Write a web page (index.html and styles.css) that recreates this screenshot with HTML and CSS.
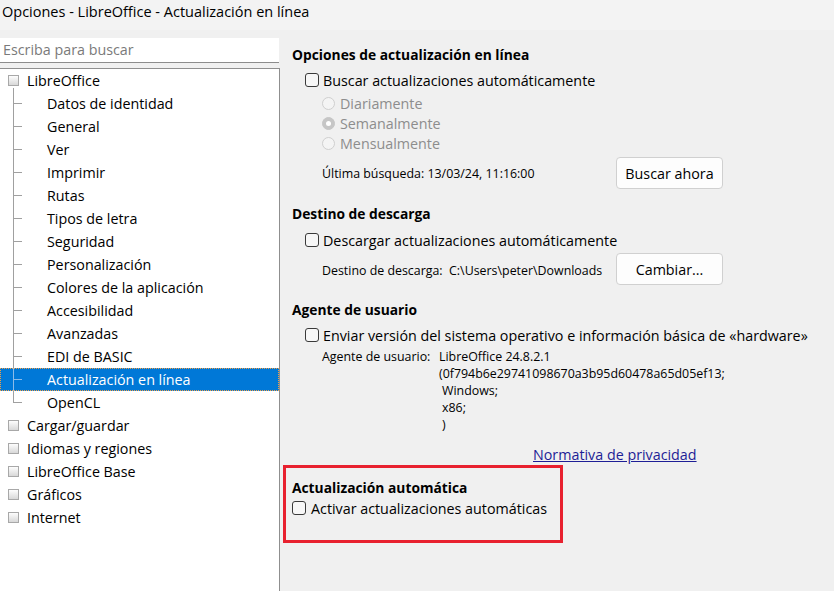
FILE: index.html
```html
<!DOCTYPE html>
<html lang="es">
<head>
<meta charset="utf-8">
<title>Opciones - LibreOffice - Actualización en línea</title>
<link rel="stylesheet" href="styles.css">
</head>
<body>
<div class="titlebar">Opciones - LibreOffice - Actualización en línea</div>
<div class="main">
  <div class="left">
    <div class="search">Escriba para buscar</div>
    <div class="tree">
      <div class="row top"><span class="exp"></span><span>LibreOffice</span></div>
      <div class="children">
        <div class="row child">Datos de identidad</div>
        <div class="row child">General</div>
        <div class="row child">Ver</div>
        <div class="row child">Imprimir</div>
        <div class="row child">Rutas</div>
        <div class="row child">Tipos de letra</div>
        <div class="row child">Seguridad</div>
        <div class="row child">Personalización</div>
        <div class="row child">Colores de la aplicación</div>
        <div class="row child">Accesibilidad</div>
        <div class="row child">Avanzadas</div>
        <div class="row child">EDI de BASIC</div>
        <div class="row child selected">Actualización en línea</div>
        <div class="row child last">OpenCL</div>
      </div>
      <div class="row top"><span class="exp"></span><span>Cargar/guardar</span></div>
      <div class="row top"><span class="exp"></span><span>Idiomas y regiones</span></div>
      <div class="row top"><span class="exp"></span><span>LibreOffice Base</span></div>
      <div class="row top"><span class="exp"></span><span>Gráficos</span></div>
      <div class="row top"><span class="exp"></span><span>Internet</span></div>
    </div>
  </div>
  <div class="right">
    <div class="section s1">
      <div class="heading">Opciones de actualización en línea</div>
      <div class="cbrow indent"><span class="cb"></span><span>Buscar actualizaciones automáticamente</span></div>
      <div class="radios">
        <div class="radiorow"><span class="radio"></span><span>Diariamente</span></div>
        <div class="radiorow"><span class="radio checked"></span><span>Semanalmente</span></div>
        <div class="radiorow"><span class="radio"></span><span>Mensualmente</span></div>
      </div>
      <div class="btnrow">
        <span class="small lastcheck">Última búsqueda: 13/03/24, 11:16:00</span>
        <span class="btn">Buscar ahora</span>
      </div>
    </div>
    <div class="section s2">
      <div class="heading">Destino de descarga</div>
      <div class="cbrow indent"><span class="cb"></span><span>Descargar actualizaciones automáticamente</span></div>
      <div class="btnrow btnrow2">
        <span class="small dest">Destino de descarga:&nbsp; C:\Users\peter\Downloads</span>
        <span class="btn">Cambiar...</span>
      </div>
    </div>
    <div class="section s3">
      <div class="heading">Agente de usuario</div>
      <div class="cbrow indent"><span class="cb"></span><span>Enviar versión del sistema operativo e información básica de «hardware»</span></div>
      <div class="agent small">
        <span class="agentlabel">Agente de usuario:</span>
        <div class="agentvalue">
          <div>LibreOffice 24.8.2.1</div>
          <div>(0f794b6e29741098670a3b95d60478a65d05ef13;</div>
          <div class="sp">Windows;</div>
          <div class="sp">x86;</div>
          <div class="sp">)</div>
        </div>
      </div>
      <div class="linkrow"><span class="link">Normativa de privacidad</span></div>
    </div>
    <div class="autobox">
      <div class="heading">Actualización automática</div>
      <div class="cbrow auto"><span class="cb"></span><span>Activar actualizaciones automáticas</span></div>
    </div>
  </div>
</div>
</body>
</html>
```
FILE: styles.css
```css
* { box-sizing: border-box; }
html, body { margin: 0; padding: 0; }
body {
  width: 834px;
  height: 591px;
  overflow: hidden;
  background: #f0f0f0;
  font-family: "Open Sans", "Liberation Sans", Arial, sans-serif;
  font-size: 14.3px;
  color: #000;
}
.titlebar {
  height: 30px;
  background: #f3f3f3;
  padding-left: 2px;
  line-height: 24px;
  font-size: 14.5px;
  white-space: nowrap;
}
.main { display: flex; height: 561px; }
.left {
  width: 280px;
  flex: none;
  display: flex;
  flex-direction: column;
  padding-top: 8px;
}
.search {
  width: 279px;
  height: 25px;
  background: #fff;
  border-bottom: 1px solid #8c8c8c;
  padding-left: 3px;
  line-height: 24px;
  color: #7a7a7a;
}
.tree {
  margin-top: 5px;
  flex: 1;
  width: 280px;
  background: #fff;
  border: 1px solid #8f8f8f;
  border-left: none;
  border-bottom: none;
}
.row {
  height: 23px;
  display: flex;
  align-items: center;
  white-space: nowrap;
  position: relative;
}
.row.top { padding-left: 8px; gap: 8px; }
.exp {
  width: 11px;
  height: 11px;
  flex: none;
  border: 1px solid #a8a8a8;
  background: linear-gradient(#fdfdfd, #d8d8d8);
}
.children { position: relative; }
.children::before {
  content: "";
  position: absolute;
  left: 13px;
  top: -4px;
  bottom: 11px;
  width: 1px;
  background: #a0a0a0;
}
.row.child { padding-left: 47px; }
.row.child::before {
  content: "";
  position: absolute;
  left: 13px;
  top: 11px;
  width: 9px;
  height: 1px;
  background: #a0a0a0;
}
.row.selected {
  background: #0078d7;
  color: #fff;
  border: 1px dotted #f0a048;
  width: 279px;
  padding-left: 46px;
}
.row.selected::before { left: 12px; top: 10px; background: #8cbbe8; }
.row.selected::after {
  content: "";
  position: absolute;
  left: 12px;
  top: -1px;
  bottom: -1px;
  width: 1px;
  background: #8cbbe8;
}

.right {
  flex: 1;
  padding: 15px 0 0 3px;
}
.section { padding-left: 9px; }
.heading {
  font-weight: bold;
  font-size: 13.8px;
  height: 20px;
  line-height: 20px;
  white-space: nowrap;
}
.cbrow {
  display: flex;
  align-items: center;
  gap: 4px;
  height: 24px;
  margin-top: 3px;
  white-space: nowrap;
}
.cbrow.indent { padding-left: 13px; }
.cb {
  width: 14px;
  height: 14px;
  flex: none;
  border: 1px solid #3a3a3a;
  border-radius: 3px;
  background: #f7f7f7;
}
.radios { margin-top: 1px; padding-left: 30px; color: #8d8d8d; }
.radiorow {
  display: flex;
  align-items: center;
  gap: 5px;
  height: 20px;
}
.radio {
  width: 13px;
  height: 13px;
  flex: none;
  border-radius: 50%;
  border: 1px solid #cfcfcf;
  background: #f4f4f4;
  position: relative;
}
.radio.checked {
  background: #c6c6c6;
  border-color: #c6c6c6;
}
.radio.checked::after {
  content: "";
  position: absolute;
  left: 3px;
  top: 3px;
  width: 5px;
  height: 5px;
  border-radius: 50%;
  background: #fff;
}
.small { font-size: 12.4px; }
.btnrow {
  display: flex;
  align-items: center;
  height: 32px;
  margin-top: 4px;
  padding-left: 30px;
  white-space: nowrap;
}
.btnrow2 { margin-top: 1px; }
.lastcheck { width: 294px; flex: none; padding-top: 1px; }
.dest { width: 294px; flex: none; padding-top: 2px; }
.btn {
  width: 107px;
  height: 32px;
  flex: none;
  background: #fdfdfd;
  border: 1px solid #d0d0d0;
  border-radius: 4px;
  display: flex;
  align-items: center;
  justify-content: center;
}
.s2 .heading, .s3 .heading { margin-top: 15px; }
.s2 .cbrow { margin-top: 4px; }
.agent {
  display: flex;
  padding-left: 30px;
  margin-top: 1px;
  line-height: 17px;
  white-space: nowrap;
}
.agentlabel { width: 117px; flex: none; }
.agentvalue .sp { padding-left: 3px; }
.linkrow {
  margin-top: 12px;
  height: 20px;
  line-height: 20px;
  padding-left: 241px;
}
.link {
  color: #1e1e96;
  text-decoration: underline;
}
.autobox {
  width: 280px;
  height: 78px;
  border: 3px solid #e8212f;
  padding: 10px 0 0 6px;
}
.cbrow.auto { height: 20px; margin-top: 0; gap: 5px; }
```
